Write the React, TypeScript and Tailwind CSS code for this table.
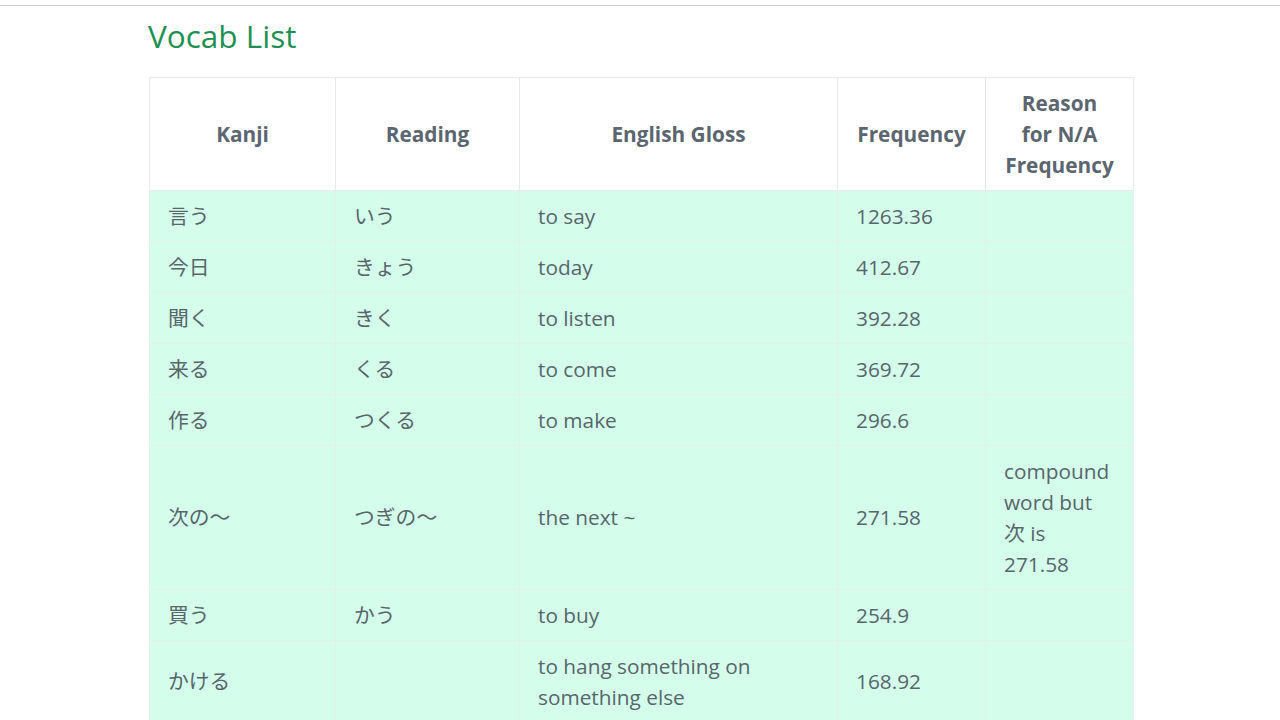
import React from "react";

type Row = { kanji: string; reading: string; gloss: string; freq: string; reason: string };

const rows: Row[] = [
  { kanji: "言う", reading: "いう", gloss: "to say", freq: "1263.36", reason: "" },
  { kanji: "今日", reading: "きょう", gloss: "today", freq: "412.67", reason: "" },
  { kanji: "聞く", reading: "きく", gloss: "to listen", freq: "392.28", reason: "" },
  { kanji: "来る", reading: "くる", gloss: "to come", freq: "369.72", reason: "" },
  { kanji: "作る", reading: "つくる", gloss: "to make", freq: "296.6", reason: "" },
  { kanji: "次の〜", reading: "つぎの〜", gloss: "the next ~", freq: "271.58", reason: "compound word but 次 is 271.58" },
  { kanji: "買う", reading: "かう", gloss: "to buy", freq: "254.9", reason: "" },
  { kanji: "かける", reading: "", gloss: "to hang something on something else", freq: "168.92", reason: "" },
];

const font = { fontFamily: '"Open Sans", "Noto Sans CJK JP", sans-serif' };

export default function App() {
  return (
    <div className="min-h-screen bg-white" style={font}>
      <div className="h-[5px]" />
      <div className="border-t border-[#cfcfcf]" />
      <div className="mx-auto w-[982px] pt-[11px]">
        <h1 className="-ml-[1px] text-[31.5px] leading-[38px] font-normal text-[#1e9152]">Vocab List</h1>
        <table className="mt-[22px] table-fixed border-collapse w-[984px] text-[20.8px] leading-[31px]">
          <colgroup>
            <col className="w-[186px]" />
            <col className="w-[184px]" />
            <col className="w-[318px]" />
            <col className="w-[148px]" />
            <col className="w-[148px]" />
          </colgroup>
          <thead>
            <tr className="bg-white">
              {["Kanji", "Reading", "English Gloss", "Frequency", "Reason for N/A Frequency"].map((h) => (
                <th
                  key={h}
                  className="border border-[#e8e8e8] px-[18px] py-[9.5px] text-center align-middle font-bold text-[#5b6670]"
                >
                  {h}
                </th>
              ))}
            </tr>
          </thead>
          <tbody>
            {rows.map((r) => (
              <tr key={r.kanji} className="bg-[#d5fdec]">
                {[r.kanji, r.reading, r.gloss, r.freq, r.reason].map((c, i) => (
                  <td
                    key={i}
                    className="border border-[#e4f1ea] px-[18px] py-[9.5px] align-middle text-left text-[#58666a]"
                  >
                    {c}
                  </td>
                ))}
              </tr>
            ))}
          </tbody>
        </table>
      </div>
    </div>
  );
}
